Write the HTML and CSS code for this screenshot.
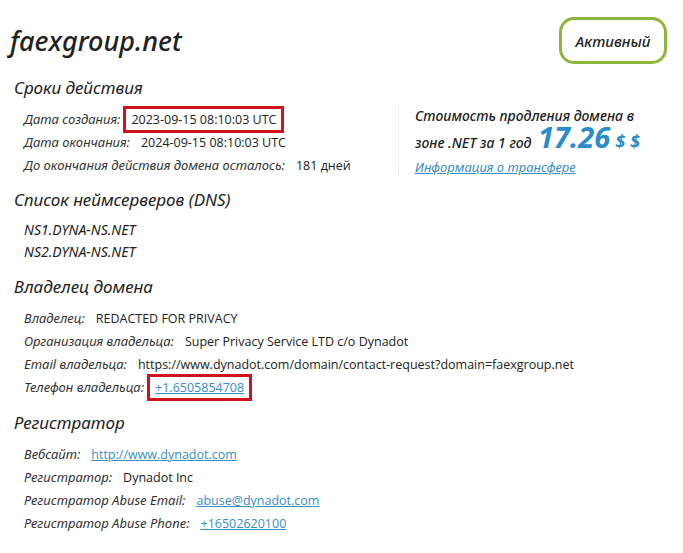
FILE: index.html
```html
<!DOCTYPE html>
<html lang="ru">
<head>
  <meta charset="UTF-8" />
  <meta name="viewport" content="width=device-width, initial-scale=1" />
  <title>faexgroup.net | Whois</title>
  <link rel="stylesheet" href="styles.css">
</head>
<body>
  <div class="page">
    <div class="header">
      <h1 class="domain">faexgroup.net</h1>
      <div class="badge">Активный</div>
    </div>

    <div class="top">
      <div class="section">
        <h2 class="heading">Сроки действия</h2>
        <div class="rows">
          <div class="row"><span class="label">Дата создания:</span><span class="value mark">2023-09-15 08:10:03 UTC</span></div>
          <div class="row"><span class="label">Дата окончания:</span><span class="value">2024-09-15 08:10:03 UTC</span></div>
          <div class="row"><span class="label">До окончания действия домена осталось:</span><span class="value">181 дней</span></div>
        </div>
      </div>
      <div class="price">
        <div>Стоимость продления домена в</div>
        <div>зоне .NET за 1 год <span class="sum">17.26</span><span class="cur">$ $</span></div>
        <a class="link" href="#">Информация о трансфере</a>
      </div>
    </div>

    <div class="section ns-section">
      <h2 class="heading">Список неймсерверов (DNS)</h2>
      <div class="rows ns">
        <div class="row">NS1.DYNA-NS.NET</div>
        <div class="row">NS2.DYNA-NS.NET</div>
      </div>
    </div>

    <div class="section">
      <h2 class="heading">Владелец домена</h2>
      <div class="rows">
        <div class="row"><span class="label">Владелец:</span><span class="value">REDACTED FOR PRIVACY</span></div>
        <div class="row"><span class="label">Организация владельца:</span><span class="value">Super Privacy Service LTD c/o Dynadot</span></div>
        <div class="row"><span class="label">Email владельца:</span><span class="value">https://www.dynadot.com/domain/contact-request?domain=faexgroup.net</span></div>
        <div class="row"><span class="label">Телефон владельца:</span><a class="value link mark" href="#">+1.6505854708</a></div>
      </div>
    </div>

    <div class="section">
      <h2 class="heading">Регистратор</h2>
      <div class="rows">
        <div class="row"><span class="label">Вебсайт:</span><a class="value link" href="#">http://www.dynadot.com</a></div>
        <div class="row"><span class="label">Регистратор:</span><span class="value">Dynadot Inc</span></div>
        <div class="row"><span class="label">Регистратор Abuse Email:</span><a class="value link" href="#">abuse@dynadot.com</a></div>
        <div class="row"><span class="label">Регистратор Abuse Phone:</span><a class="value link" href="#">+16502620100</a></div>
      </div>
    </div>
  </div>
</body>
</html>
```

FILE: styles.css
```css
body {
  margin: 0;
  background: #fff;
  color: #222;
  font-family: 'Noto Sans', 'Open Sans', sans-serif;
}
.page {
  width: 683px;
  padding: 17px 16px 0 10px;
  box-sizing: border-box;
}
.header {
  display: flex;
  justify-content: space-between;
  align-items: center;
  height: 47px;
}
.domain {
  margin: 0;
  font-size: 27px;
  font-weight: 500;
  font-style: italic;
  color: #222;
}
.badge {
  width: 108px;
  height: 47px;
  box-sizing: border-box;
  border: 3px solid #8fb63c;
  border-radius: 15px;
  display: flex;
  align-items: center;
  justify-content: center;
  font-size: 15px;
  font-style: italic;
  font-weight: 500;
  color: #222;
}
.top {
  display: flex;
}
.top .section {
  width: 384px;
}
.section {
  margin-top: 12px;
  padding-left: 4px;
}
.ns-section {
  margin-top: 11px;
}
.heading {
  margin: 0;
  font-size: 17px;
  line-height: 24px;
  font-weight: 400;
  font-style: italic;
  color: #222;
}
.rows {
  padding: 8px 0 0 10px;
}
.rows.ns {
  padding-top: 7px;
}
.row {
  font-size: 13px;
  line-height: 23px;
  white-space: nowrap;
}
.ns .row {
  font-size: 14px;
  font-style: italic;
  line-height: 22px;
}
.label {
  font-style: italic;
  color: #333;
  margin-right: 11px;
}
.value {
  font-family: 'Open Sans', 'Noto Sans', sans-serif;
  font-size: 12.5px;
  color: #222;
}
.mark {
  outline: 3px solid #d0121b;
  outline-offset: 2px;
  padding: 0 3px;
  margin-left: -3px;
}
.link {
  color: #3a8dc5;
  text-decoration: underline;
}
.price {
  margin-top: 40px;
  height: 70px;
  border-left: 1px solid #ececec;
  padding-left: 16px;
  font-size: 14px;
  line-height: 24px;
  font-style: italic;
  font-weight: 500;
  color: #222;
}
.price .link {
  font-size: 13px;
  font-weight: 400;
}
.sum {
  display: inline-block;
  font-size: 29px;
  font-weight: 700;
  color: #2a8cc8;
  line-height: 18px;
  margin-left: 3px;
}
.cur {
  font-size: 18px;
  font-weight: 700;
  color: #2a8cc8;
  margin-left: 5px;
}
```
